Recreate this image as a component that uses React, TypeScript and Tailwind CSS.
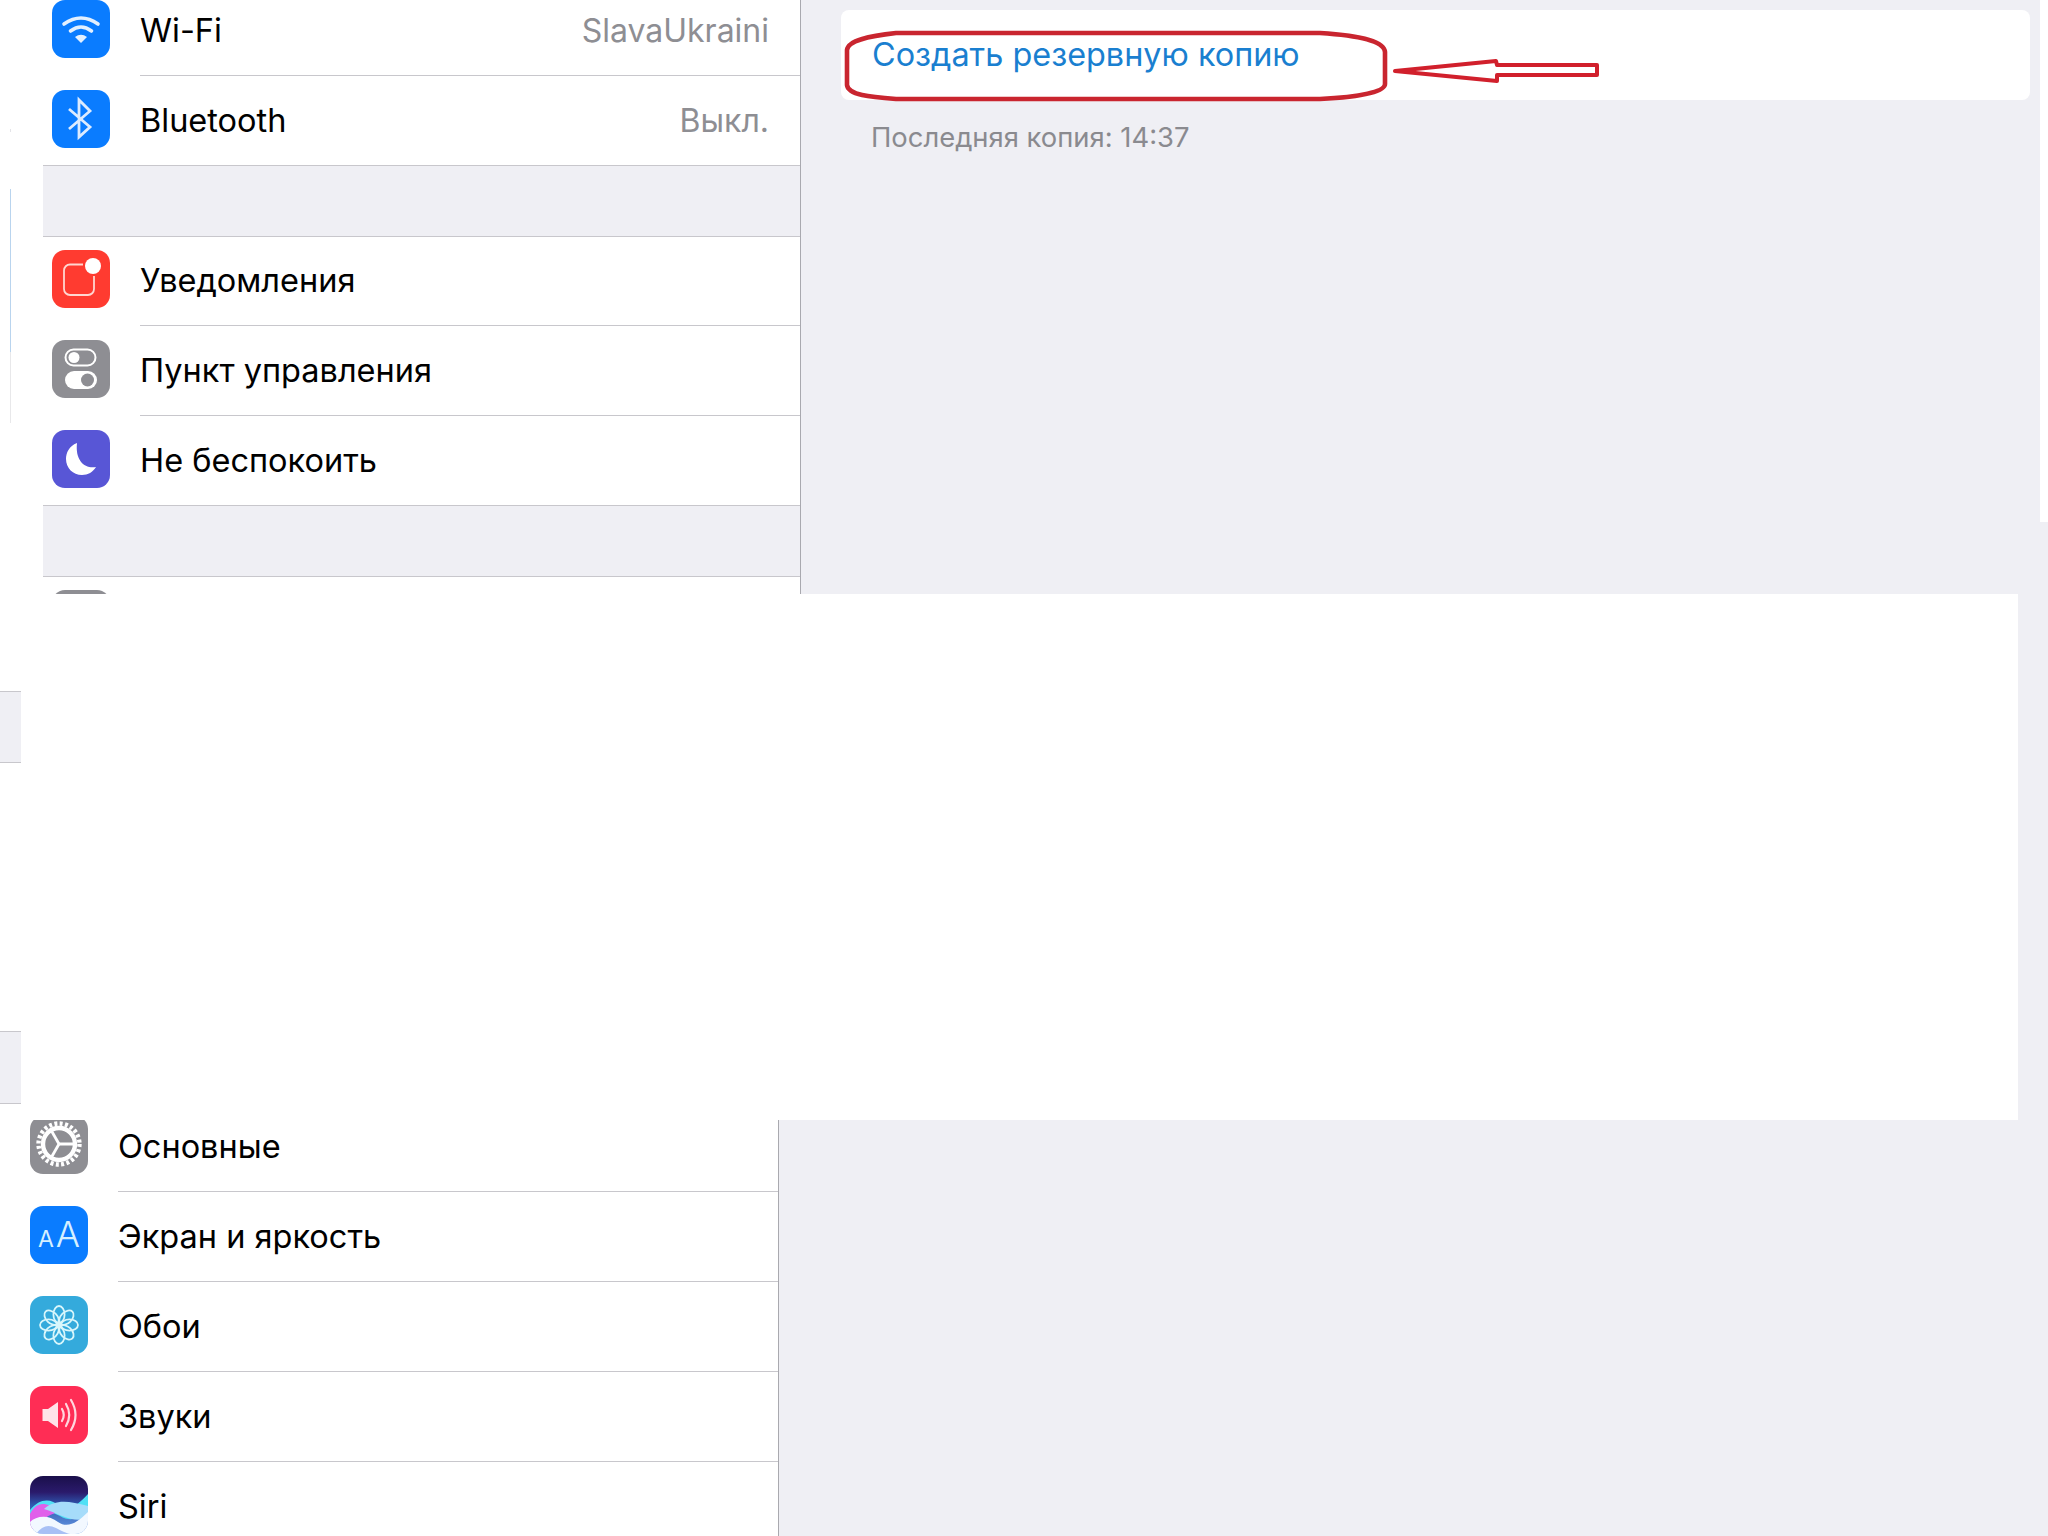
import React from 'react';

const Tile: React.FC<{ bg: string; children: React.ReactNode }> = ({ bg, children }) => (
  <div className={`h-[58px] w-[58px] shrink-0 overflow-hidden rounded-[13px] ${bg}`}>
    <svg viewBox="0 0 58 58" className="h-full w-full" fill="none">
      {children}
    </svg>
  </div>
);

const WifiIcon = () => (
  <Tile bg="bg-[#0a7cff]">
    <g stroke="#e3f0ff" strokeWidth={3.6} strokeLinecap="round">
      <path d="M12 24 Q29 12 46 24" />
      <path d="M18.5 31 Q29 23 39.5 31" />
    </g>
    <path d="M23 37 Q29 32.5 35 37 L29 43 Z" fill="#e3f0ff" />
  </Tile>
);

const BluetoothIcon = () => (
  <Tile bg="bg-[#0a7cff]">
    <path d="M17 19 L38 37 L27 47 V10 L38 21 L17 39" stroke="#dcebff" strokeWidth={2.8} strokeLinejoin="miter" />
  </Tile>
);

const NotifyIcon = () => (
  <Tile bg="bg-[#ff3b30]">
    <path d="M31 14.5 H18 a6 6 0 0 0 -6 6 V39 a6 6 0 0 0 6 6 H36 a6 6 0 0 0 6 -6 V26" stroke="#ffd6d0" strokeWidth={1.8} />
    <circle cx={41} cy={16} r={8} fill="#fff" />
  </Tile>
);

const ControlIcon = () => (
  <Tile bg="bg-[#8e8e93]">
    <rect x={13.5} y={9.5} width={30} height={16} rx={8} stroke="#fff" strokeWidth={2} />
    <circle cx={22} cy={17.5} r={5.5} fill="#fff" />
    <rect x={13} y={31} width={32} height={18} rx={9} fill="#fff" />
    <circle cx={35.5} cy={40} r={6.5} fill="#8e8e93" />
  </Tile>
);

const MoonIcon = () => (
  <Tile bg="bg-[#5856d6]">
    <path d="M25 13 C17 16 14 23 14 29 C14 38 21 45 30 45 C36 45 41 42 44 37 C33 39 23 31 25 13 Z" fill="#fff" />
  </Tile>
);

const GearIcon = () => (
  <Tile bg="bg-[#8e8e93]">
    <circle cx={29} cy={28} r={16} stroke="#fff" strokeWidth={4.4} />
    <circle cx={29} cy={28} r={20.5} stroke="#fff" strokeWidth={4.4} strokeDasharray="3 2.37" />
    <g stroke="#fff" strokeWidth={2.8}>
      <path d="M29 28 H45" />
      <path d="M29 28 L21 14" />
      <path d="M29 28 L21 42" />
    </g>
  </Tile>
);

const DisplayIcon = () => (
  <div className="flex h-[58px] w-[58px] shrink-0 items-baseline justify-center gap-[2px] rounded-[13px] bg-[#0a7cff] pt-[10px] text-[#d6f0ff]">
    <span className="text-[23px] leading-[36px]">A</span>
    <span className="text-[36px] font-light leading-[36px]">A</span>
  </div>
);

const FlowerIcon = () => (
  <Tile bg="bg-[#34aadc]">
    <g stroke="#d8f6fb" strokeWidth={1.8}>
      {[0, 45, 90, 135, 180, 225, 270, 315].map((deg) => (
        <ellipse key={deg} cx={29} cy={18.5} rx={5.6} ry={8.5} transform={`rotate(${deg} 29 29)`} />
      ))}
    </g>
    <circle cx={29} cy={29} r={3} fill="#d8f6fb" />
  </Tile>
);

const SoundIcon = () => (
  <Tile bg="bg-[#ff2d55]">
    <path d="M12.5 23 H18 L28 16 V42 L18 35 H12.5 Z" fill="#ffe3e8" />
    <g stroke="#ffd6de" strokeWidth={2.2} strokeLinecap="round">
      <path d="M32 23 Q35.5 29 32 35" />
      <path d="M36 18 Q42.5 29 36 40" />
      <path d="M41 14 Q50 29 41 44" />
    </g>
  </Tile>
);

const SiriIcon = () => (
  <Tile bg="bg-[linear-gradient(180deg,#1a0f4a_0%,#2a1a6b_28%,#2f58b0_50%,#6a9fe8_100%)]">
    <path d="M0 34 C10 22 20 22 30 30 C40 38 50 26 58 18 V32 C50 44 40 46 30 40 C20 34 10 36 0 46 Z" fill="#4fe0f5" />
    <path d="M0 38 C6 26 16 24 28 36 C16 40 8 46 0 56 Z" fill="#e060ea" />
    <path d="M14 33 C26 23 38 25 58 30 V42 C44 48 30 38 14 33 Z" fill="#a6dcfa" />
    <path d="M0 46 C6 40 18 38 28 46 C38 53 48 46 58 36 V58 H0 Z" fill="#f2f8ff" />
    <path d="M6 58 C12 50 18 48 26 52 C34 56 38 58 42 58 Z" fill="#a8c0f5" />
  </Tile>
);

interface RowProps {
  icon: React.ReactNode;
  label: string;
  value?: string;
  first?: boolean;
  last?: boolean;
}

const Row: React.FC<RowProps> = ({ icon, label, value, first, last }) => (
  <div
    className={`flex h-[90px] bg-white pl-[9px] ${first ? 'border-t border-[#c8c7cc] pt-[13px]' : 'pt-[14px]'} ${last ? 'border-b border-[#c8c7cc]' : ''}`}
  >
    {icon}
    <div
      className={`ml-[30px] flex flex-1 items-start justify-between pr-[31px] ${first ? '-mt-[13px]' : '-mt-[14px]'} ${last ? '' : 'border-b border-[#c8c7cc]'}`}
    >
      <span className={`text-[32.5px] leading-[60px] text-black ${first ? 'mt-[14px]' : 'mt-[15px]'}`}>{label}</span>
      {value && <span className="mt-[15px] text-[32px] leading-[60px] text-[#8e8e93]">{value}</span>}
    </div>
  </div>
);

const Gap = () => <div className="h-[70px] bg-[#efeff4]" />;

export default function App() {
  return (
    <div className="relative flex h-[1536px] w-[2048px] flex-col overflow-hidden bg-white font-['Inter','Liberation_Sans',sans-serif]">
      {/* top screenshot */}
      <div className="flex h-[594px] shrink-0">
        <div className="w-[43px] shrink-0 pl-[10px]">
          <div className="mt-[129px] h-[3px] w-px bg-[#e4e4e8]" />
          <div className="mt-[57px] h-[163px] w-px bg-[#b9d4ee]" />
          <div className="h-[71px] w-px bg-[#e8e8ea]" />
        </div>
        <div className="w-[758px] shrink-0 overflow-hidden border-r border-[#a9a9af]">
          <div className="-mt-[14px]">
            <Row icon={<WifiIcon />} label="Wi-Fi" value="SlavaUkraini" />
            <Row icon={<BluetoothIcon />} label="Bluetooth" value="Выкл." last />
            <Gap />
            <Row icon={<NotifyIcon />} label="Уведомления" first />
            <Row icon={<ControlIcon />} label="Пункт управления" />
            <Row icon={<MoonIcon />} label="Не беспокоить" last />
            <Gap />
            <Row icon={<div className="h-[58px] w-[58px] rounded-[13px] bg-[#8e8e93]" />} label="" first />
          </div>
        </div>
        <div className="flex flex-1 bg-[#efeff4]">
          <div className="flex-1 pl-[40px] pr-[10px] pt-[10px]">
            <div className="flex h-[90px] items-center rounded-lg bg-white pl-[31px] text-[32.4px] text-[#1a7fd0]">
              Создать резервную копию
            </div>
            <p className="mt-[19px] pl-[30px] text-[27.4px] leading-[36px] text-[#8a8a8f]">Последняя копия: 14:37</p>
          </div>
          <div className="h-[522px] w-[8px] bg-white" />
        </div>
      </div>

      {/* blank block pasted over the middle */}
      <div className="flex h-[526px] shrink-0 bg-white">
        <div className="w-[21px] shrink-0">
          <div className="mt-[97px] h-[72px] border-y border-[#c8c7cc] bg-[#efeff4]" />
          <div className="mt-[268px] h-[73px] border-y border-[#c8c7cc] bg-[#efeff4]" />
        </div>
        <div className="flex-1" />
        <div className="w-[30px] shrink-0 bg-[#efeff4]" />
      </div>

      {/* bottom screenshot */}
      <div className="flex h-[416px] shrink-0">
        <div className="w-[21px] shrink-0" />
        <div className="w-[758px] shrink-0 overflow-hidden border-r border-[#a9a9af]">
          <div className="-mt-[18px]">
            <Row icon={<GearIcon />} label="Основные" />
            <Row icon={<DisplayIcon />} label="Экран и яркость" />
            <Row icon={<FlowerIcon />} label="Обои" />
            <Row icon={<SoundIcon />} label="Звуки" />
            <Row icon={<SiriIcon />} label="Siri" />
          </div>
        </div>
        <div className="flex-1 bg-[#efeff4]" />
      </div>

      {/* red hand-drawn marks over the button */}
      <svg viewBox="840 28 764 76" className="absolute left-[840px] top-[28px] h-[76px] w-[764px]" fill="none">
        <path
          d="M896 33 L1320 33 C1365 36 1384 42 1385 52 L1385 84 C1385 92 1360 97 1320 99 L896 99 C870 97 848 95 847 85 L847 50 C848 40 870 36 896 33 Z"
          stroke="#c9252f"
          strokeWidth={4.6}
        />
        <path
          d="M1395 71 L1496 61 L1497 65 L1597 65 L1597 75 L1497 75 L1497 81 Z"
          stroke="#d1202c"
          strokeWidth={4}
          strokeLinejoin="round"
        />
      </svg>
    </div>
  );
}
